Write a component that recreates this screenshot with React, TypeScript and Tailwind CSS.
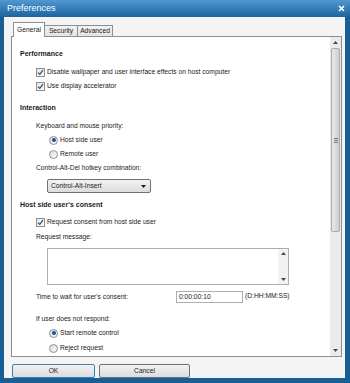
import React from "react";

function CheckBox({ checked }: { checked?: boolean }) {
  return (
    <span className="w-[9px] h-[9px] border border-[#8e8f8f] bg-gradient-to-br from-[#e6e6e6] to-[#fbfbfb] flex items-center justify-center shrink-0">
      {checked && (
        <svg width="7" height="7" viewBox="0 0 7 7">
          <path d="M1 3.6 L2.8 5.4 L6 1.2" fill="none" stroke="#2b4a7a" strokeWidth="1.2" />
        </svg>
      )}
    </span>
  );
}

function Radio({ checked }: { checked?: boolean }) {
  return (
    <span className="w-[9px] h-[9px] rounded-full border border-[#8e8f8f] bg-gradient-to-br from-[#dcdcdc] to-[#fafafa] flex items-center justify-center shrink-0">
      {checked && <span className="w-[4px] h-[4px] rounded-full bg-[#1f4f8f]" />}
    </span>
  );
}

function Arrow({ dir }: { dir: "up" | "down" }) {
  return (
    <svg width="5" height="3" viewBox="0 0 5 3">
      <path d={dir === "up" ? "M0 3 L2.5 0 L5 3 Z" : "M0 0 L2.5 3 L5 0 Z"} fill="#4a4a4a" />
    </svg>
  );
}

export default function App() {
  return (
    <div className="w-[350px] h-[383px] bg-[#1a5e96] flex flex-col font-['Liberation_Sans',Arial,sans-serif] text-[#1b1b1b] overflow-hidden">
      {/* Title bar */}
      <div className="h-[17px] shrink-0 bg-gradient-to-b from-[#4f98d0] to-[#1a64a0] flex items-center justify-between pl-[7px] pr-[5px]">
        <span className="text-white text-[9px] leading-none">Preferences</span>
        <svg width="7" height="7" viewBox="0 0 7 7">
          <path d="M1 1 L6 6 M6 1 L1 6" stroke="#ffffff" strokeWidth="1.6" />
        </svg>
      </div>

      {/* Client area */}
      <div className="flex-1 ml-[4px] mr-[5px] mb-[5px] bg-[#f4f4f4] flex flex-col pl-[7px] pr-[3px]">
        {/* Tabs */}
        <div className="h-[15px] mt-[4px] flex items-end pl-[2px] text-[6.7px] leading-none">
          <div className="h-[15px] w-[32px] bg-white border border-b-0 border-[#8c8e94] flex items-center justify-center relative top-[1px] z-10">
            General
          </div>
          <div className="h-[11px] w-[33px] bg-gradient-to-b from-[#f2f2f2] to-[#e3e3e3] border border-l-0 border-b-0 border-[#8c8e94] flex items-center justify-center">
            Security
          </div>
          <div className="h-[11px] w-[35px] bg-gradient-to-b from-[#f2f2f2] to-[#e3e3e3] border border-l-0 border-b-0 border-[#8c8e94] flex items-center justify-center">
            Advanced
          </div>
        </div>

        {/* Panel */}
        <div className="h-[321px] bg-white border border-[#8c8e94] flex">
          <div className="flex-1 flex flex-col pl-[8px] pt-[9px] text-[6.7px] leading-none">
            <div className="h-[14px] flex items-center font-bold text-[7px]">Performance</div>
            <div className="h-[14px] mt-[5px] flex items-center gap-[2px] pl-[16px]">
              <CheckBox checked />
              <span>Disable wallpaper and user interface effects on host computer</span>
            </div>
            <div className="h-[14px] flex items-center gap-[2px] pl-[16px]">
              <CheckBox checked />
              <span>Use display accelerator</span>
            </div>

            <div className="h-[14px] mt-[7px] flex items-center font-bold text-[7px]">Interaction</div>
            <div className="h-[14px] mt-[5px] flex items-center pl-[16px]">Keyboard and mouse priority:</div>
            <div className="h-[14px] flex items-center gap-[2px] pl-[29px]">
              <Radio checked />
              <span>Host side user</span>
            </div>
            <div className="h-[14px] flex items-center gap-[2px] pl-[29px]">
              <Radio />
              <span>Remote user</span>
            </div>
            <div className="h-[14px] flex items-center pl-[16px]">Control-Alt-Del hotkey combination:</div>
            <div className="mt-[4px] pl-[27px]">
              <div className="w-[104px] h-[14px] rounded-[2px] border border-[#707070] bg-gradient-to-b from-[#f3f3f3] to-[#dcdcdc] flex items-center justify-between pl-[3px] pr-[4px]">
                <span>Control-Alt-Insert</span>
                <svg width="5" height="3" viewBox="0 0 5 3">
                  <path d="M0 0 L2.5 3 L5 0 Z" fill="#1b1b1b" />
                </svg>
              </div>
            </div>

            <div className="h-[14px] mt-[4px] flex items-center font-bold text-[7px]">Host side user&apos;s consent</div>
            <div className="h-[14px] mt-[4px] flex items-center gap-[2px] pl-[16px]">
              <CheckBox checked />
              <span>Request consent from host side user</span>
            </div>
            <div className="h-[14px] mt-[1px] flex items-center pl-[16px]">Request message:</div>
            <div className="mt-[4px] pl-[27px]">
              <div className="w-[242px] h-[37px] border border-[#abadb3] bg-white flex justify-end">
                <div className="w-[10px] bg-[#f2f2f2] flex flex-col items-center justify-between py-[3px]">
                  <Arrow dir="up" />
                  <Arrow dir="down" />
                </div>
              </div>
            </div>

            <div className="h-[12px] mt-[6px] flex items-center pl-[16px]">
              <span className="w-[140px]">Time to wait for user&apos;s consent:</span>
              <div className="w-[67px] h-[12px] border border-[#abadb3] bg-white flex items-center pl-[2px]">0:00:00:10</div>
              <span className="ml-[2px] self-start pt-[2px]">(D:HH:MM:SS)</span>
            </div>

            <div className="h-[14px] mt-[9px] flex items-center pl-[16px]">If user does not respond:</div>
            <div className="h-[14px] flex items-center gap-[2px] pl-[29px]">
              <Radio checked />
              <span>Start remote control</span>
            </div>
            <div className="h-[14px] mt-[1px] flex items-center gap-[2px] pl-[29px]">
              <Radio />
              <span>Reject request</span>
            </div>
          </div>

          {/* Scrollbar */}
          <div className="w-[11px] bg-[#ebebeb] flex flex-col">
            <div className="h-[11px] flex items-center justify-center">
              <Arrow dir="up" />
            </div>
            <div className="h-[184px] mx-[1px] rounded-[2px] border border-[#a9a9a9] bg-gradient-to-r from-[#e9e9e9] via-[#dcdcdc] to-[#cfcfcf] flex flex-col items-center justify-center gap-[1px]">
              <span className="w-[4px] h-px bg-[#7a7a7a]" />
              <span className="w-[4px] h-px bg-[#7a7a7a]" />
              <span className="w-[4px] h-px bg-[#7a7a7a]" />
            </div>
            <div className="flex-1" />
            <div className="h-[11px] flex items-center justify-center">
              <Arrow dir="down" />
            </div>
          </div>
        </div>

        {/* Buttons */}
        <div className="mt-[7px] flex gap-[4px] pl-[1px] text-[6.7px] leading-none">
          <button className="w-[83px] h-[14px] rounded-[2px] border border-[#3c7fb1] bg-gradient-to-b from-[#f2f2f2] to-[#dcdcdc]">
            OK
          </button>
          <button className="w-[91px] h-[14px] rounded-[2px] border border-[#707070] bg-gradient-to-b from-[#f2f2f2] to-[#dcdcdc]">
            Cancel
          </button>
        </div>
      </div>
    </div>
  );
}
